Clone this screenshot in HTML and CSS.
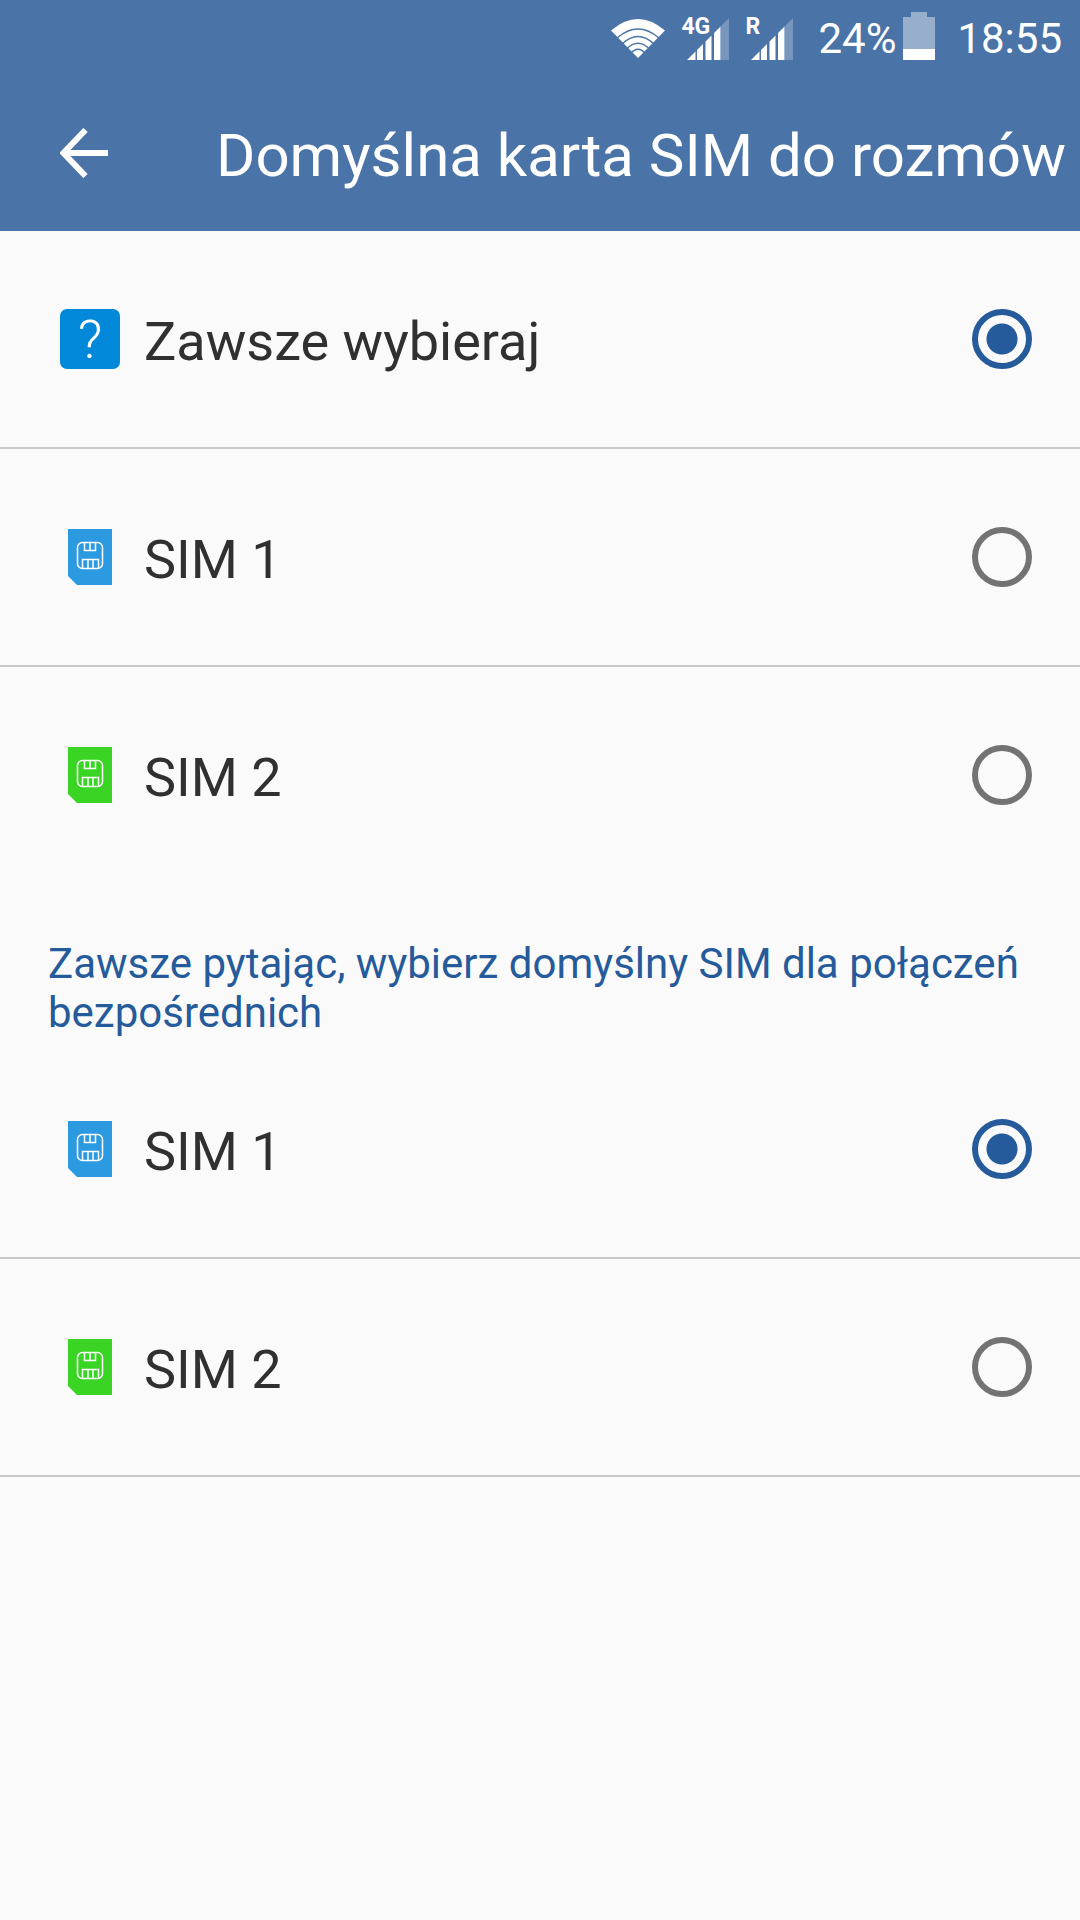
FILE: index.html
```html
<!DOCTYPE html>
<html lang="pl">
<head>
    <meta charset="UTF-8">
    <meta name="viewport" content="width=device-width, initial-scale=1.0">
    <title>Domyślna karta SIM do rozmów</title>
    <link rel="stylesheet" href="styles.css">
</head>
<body>
    <!-- shared SIM card and signal shapes -->
    <svg class="symbols" width="0" height="0" aria-hidden="true">
        <symbol id="sim" viewBox="0 0 44 56">
            <path d="M0 0H44V56H9L0 47Z" fill="currentColor"/>
            <g fill="none" stroke="#fff" stroke-width="1.5">
                <rect x="9.5" y="13.5" width="25" height="26" rx="5"/>
                <path d="M16.5 13.5V21.5H27.5V13.5M22 14V21"/>
                <path d="M14.5 39.5V30.5H30.5V39.5M20 31V39M25 31V39"/>
            </g>
        </symbol>
        <symbol id="signal" viewBox="0 0 42 42">
            <path d="M34 8L42 0V42H34Z" fill="#fff" opacity="0.25"/>
            <path d="M0 42L8.500 33.500V42ZM10 32L16 26V42H10ZM18.500 23.500L24.500 17.500V42H18.500ZM27 15L33.500 8.500V42H27Z" fill="#fff"/>
        </symbol>
    </svg>

    <header>
        <div class="status-bar">
            <svg class="wifi" width="54" height="39" viewBox="0 0 54 39">
                <path d="M0 11.500Q27 -11.500 54 11.500L27 39Z" fill="#fff"/>
                <g fill="none" stroke="#4a73a8" stroke-width="1.6">
                    <path d="M6 19Q27 1 48 19"/>
                    <path d="M11 25Q27 10 43 25"/>
                    <path d="M15.500 30Q27 18.500 38.500 30"/>
                    <path d="M20 34Q27 26.500 34 34"/>
                </g>
            </svg>
            <div class="signal">
                <svg width="42" height="42"><use href="#signal"/></svg>
                <span>4G</span>
            </div>
            <div class="signal">
                <svg width="42" height="42"><use href="#signal"/></svg>
                <span>R</span>
            </div>
            <span class="percent">24%</span>
            <svg class="battery" width="32" height="48" viewBox="0 0 32 48">
                <path d="M0 5H8V0H24V5H32V37H0Z" fill="#98aecd"/>
                <path d="M0 37H32V48H0Z" fill="#fff"/>
            </svg>
            <span class="time">18:55</span>
        </div>
        <div class="toolbar">
            <button type="button" class="back" aria-label="Wstecz">
                <svg width="48" height="50" viewBox="0 0 48 50">
                    <path d="M25.500 2L3.500 25L25.500 48M3.500 25H48" fill="none" stroke="#fff" stroke-width="6"/>
                </svg>
            </button>
            <h1>Domyślna karta SIM do rozmów</h1>
        </div>
    </header>

    <main>
        <form>
            <div class="group">
                <label class="row" for="always">
                    <span class="icon"><span class="question">?</span></span>
                    <span class="name">Zawsze wybieraj</span>
                    <input type="radio" id="always" name="default-sim" checked>
                </label>
                <label class="row" for="sim1">
                    <span class="icon"><svg class="blue" width="44" height="56"><use href="#sim"/></svg></span>
                    <span class="name">SIM 1</span>
                    <input type="radio" id="sim1" name="default-sim">
                </label>
                <label class="row last" for="sim2">
                    <span class="icon"><svg class="green" width="44" height="56"><use href="#sim"/></svg></span>
                    <span class="name">SIM 2</span>
                    <input type="radio" id="sim2" name="default-sim">
                </label>
            </div>

            <h2>Zawsze pytając, wybierz domyślny SIM dla połączeń bezpośrednich</h2>

            <div class="group">
                <label class="row" for="direct1">
                    <span class="icon"><svg class="blue" width="44" height="56"><use href="#sim"/></svg></span>
                    <span class="name">SIM 1</span>
                    <input type="radio" id="direct1" name="direct-sim" checked>
                </label>
                <label class="row" for="direct2">
                    <span class="icon"><svg class="green" width="44" height="56"><use href="#sim"/></svg></span>
                    <span class="name">SIM 2</span>
                    <input type="radio" id="direct2" name="direct-sim">
                </label>
            </div>
        </form>
    </main>
</body>
</html>
```
FILE: styles.css
```css
/* Global Styles */
* {
    box-sizing: border-box;
}

body {
    font-family: Roboto, sans-serif;
    background-color: #fafafa;
    color: #303030;
    margin: 0;
}

svg {
    display: block;
}

.symbols {
    position: absolute;
}

/* Header */
header {
    background-color: #4a73a8;
    color: #fff;
}

.status-bar {
    display: flex;
    justify-content: flex-end;
    align-items: center;
    height: 77px;
    padding-right: 18px;
    font-size: 42px;
}

.signal {
    position: relative;
    margin-left: 22px;
}

.signal span {
    position: absolute;
    left: -6px;
    top: -4px;
    font-size: 23px;
    line-height: 26px;
    font-weight: bold;
}

.percent {
    margin-left: 25px;
}

.battery {
    margin: 0 22px 5px 7px;
}

.toolbar {
    display: flex;
    align-items: center;
    height: 154px;
    padding-left: 60px;
    padding-bottom: 2px;
}

.back {
    border: none;
    padding: 0;
    background: none;
    cursor: pointer;
}

h1 {
    margin: 0 0 0 108px;
    padding-top: 5px;
    font-size: 60px;
    line-height: 70px;
    font-weight: normal;
    white-space: nowrap;
}

/* List */
.row {
    display: flex;
    align-items: center;
    height: 218px;
    padding: 0 48px 0 60px;
    border-bottom: 2px solid #c8c8c8;
    font-size: 54px;
    cursor: pointer;
}

.row.last {
    border-bottom-color: transparent;
}

.icon {
    display: flex;
    justify-content: center;
    width: 60px;
    margin-right: 24px;
}

.name {
    flex: 1;
    padding-top: 5px;
}

.question {
    width: 60px;
    height: 60px;
    border-radius: 7px;
    background-color: #0288d9;
    color: #fff;
    font-size: 54px;
    font-weight: 300;
    line-height: 62px;
    text-align: center;
}

.blue {
    color: #2b9ae0;
}

.green {
    color: #3ad425;
}

h2 {
    margin: 0;
    padding: 54px 48px 4px;
    color: #255a9b;
    font-size: 42px;
    line-height: 49px;
    font-weight: normal;
}

input[type="radio"] {
    appearance: none;
    width: 60px;
    height: 60px;
    margin: 0;
    border: 6px solid #737373;
    border-radius: 50%;
    cursor: pointer;
}

input[type="radio"]:checked {
    border-color: #255a9b;
    background: radial-gradient(circle, #255a9b 15px, transparent 16px);
}
```
